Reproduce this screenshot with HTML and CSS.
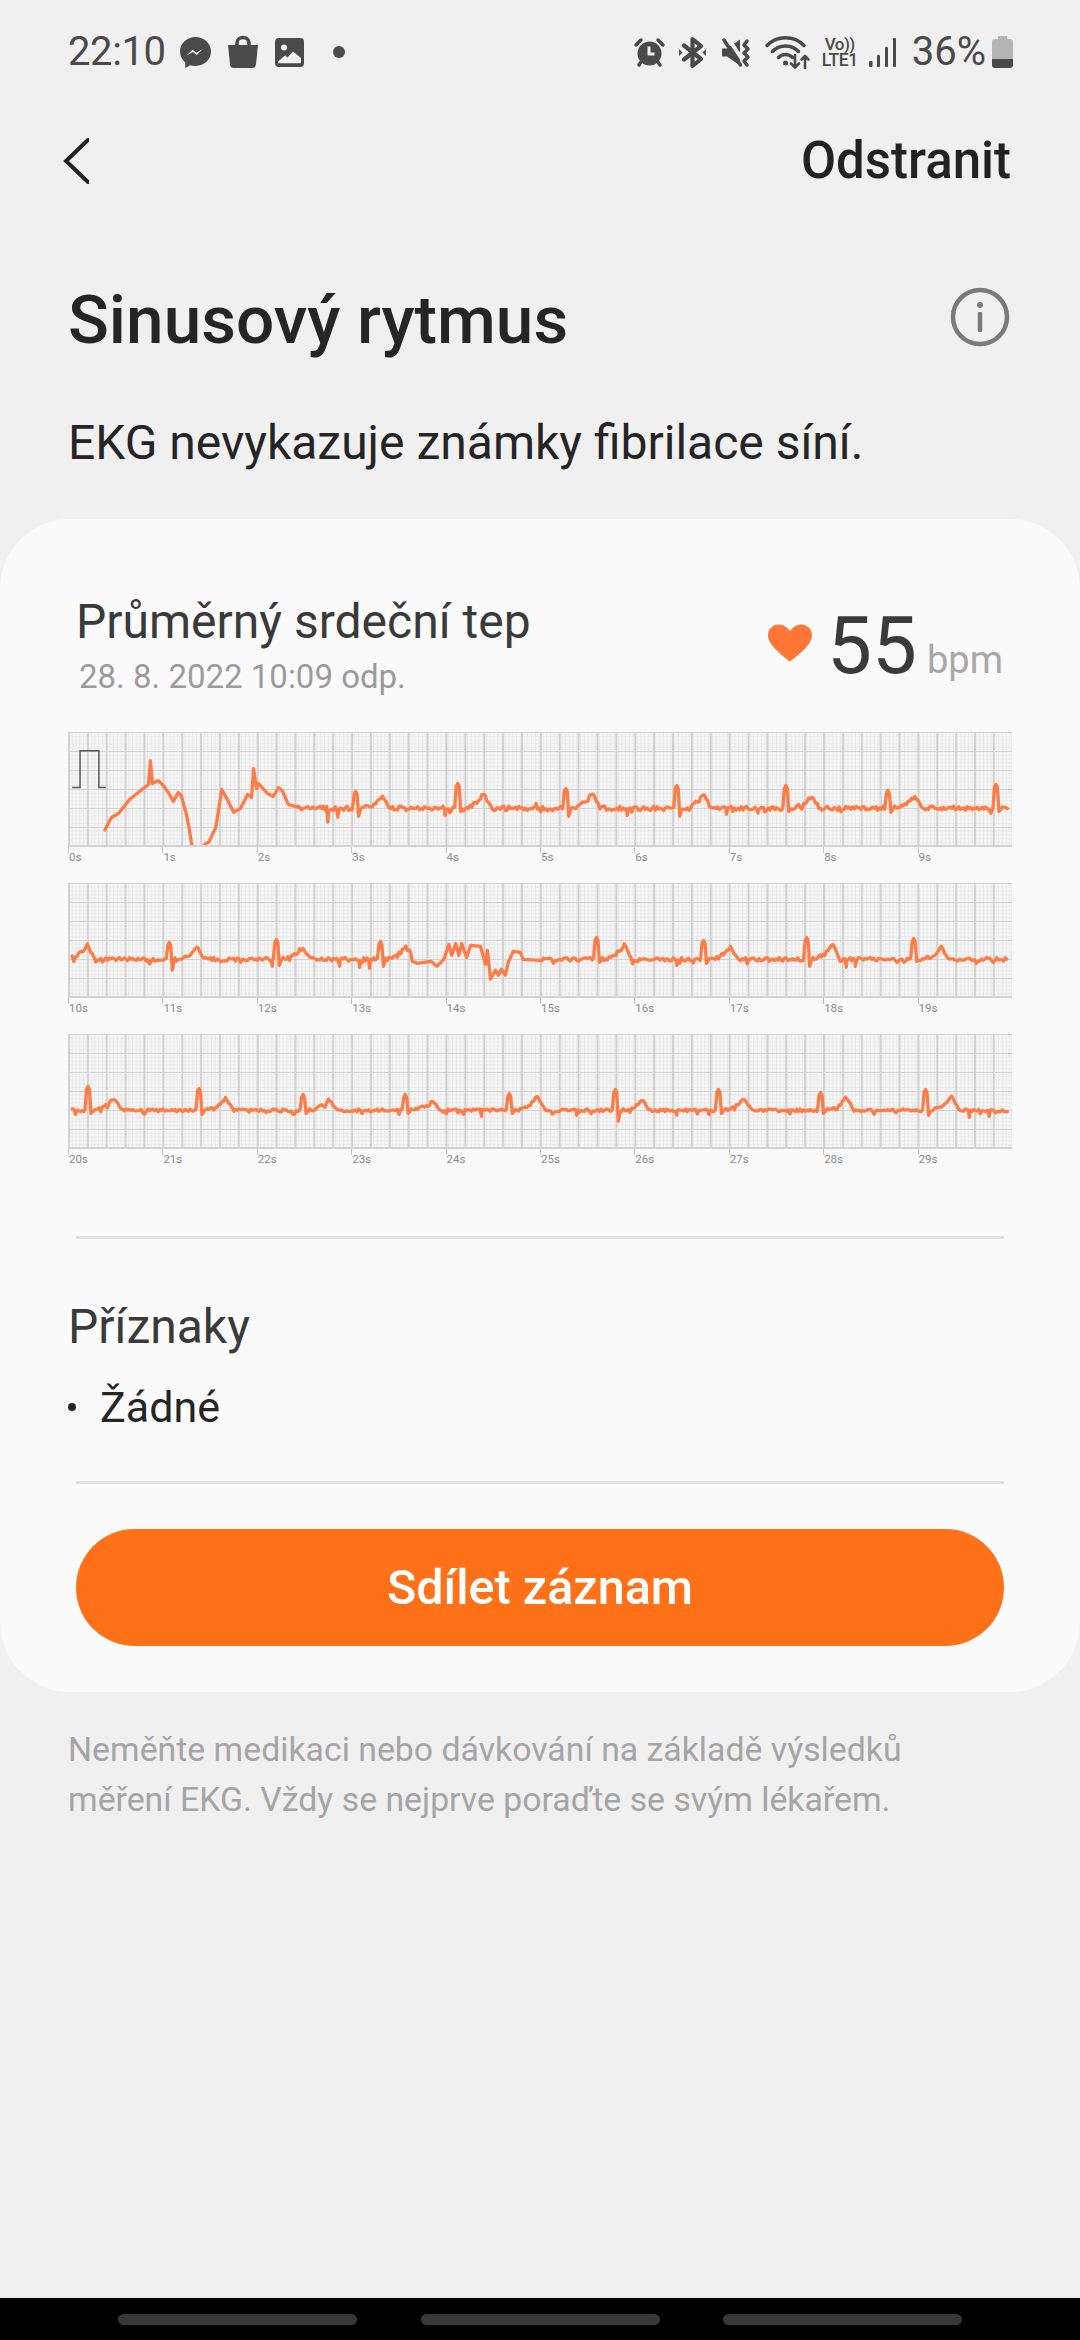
FILE: index.html
```html
<!DOCTYPE html>
<html lang="cs">
<head>
<meta charset="utf-8">
<title>Sinusový rytmus</title>
<link rel="stylesheet" href="styles.css">
</head>
<body>
<div class="page">
  <header class="status">
    <div class="status-left">
      <span class="clock">22:10</span>
      <svg class="ic ic-msg" viewBox="0 0 31 31"><path class="fill" d="M15.5 0C6.9 0 0 6.4 0 14.6c0 4.4 2 8.2 5.2 10.9V31l5-2.8c1.7.5 3.4.8 5.3.8C24.100 29 31 22.700 31 14.600 31 6.400 24.100 0 15.500 0z"/><path class="knock" d="M6.500 18.500l6-5.800 3.800 3 6.500-3.600-6 6-3.800-3z"/></svg>
      <svg class="ic ic-bag" viewBox="0 0 30 32"><path class="line" d="M9 10V7a6 5.500 0 0 1 12 0v3" /><path class="fill" d="M0 9h30l-2 19a4 4 0 0 1-4 4H6a4 4 0 0 1-4-4z"/></svg>
      <svg class="ic ic-img" viewBox="0 0 29 29"><rect class="fill" width="29" height="29" rx="4"/><circle class="knock" cx="9" cy="9.500" r="3"/><path class="knock" d="M3 23.500l7-6 2.500 2L18 13.500l8 6.500v4.200a1 1 0 0 1-1 1H3z"/></svg>
      <span class="dot"></span>
    </div>
    <div class="status-right">
      <svg class="ic ic-alarm" viewBox="0 0 29 29"><circle class="fill" cx="14.500" cy="15.500" r="12"/><path class="line" d="M1 7l5-5M28 7l-5-5M4 27l2-3M25 27l-2-3"/><path class="cut" d="M14 8.500v7.500h5.500"/></svg>
      <svg class="ic ic-bt" viewBox="0 0 27 31"><path class="line line-bold" d="M5 8.500l17 13.500-8.500 7V2l8.500 7L5 22.500"/><path class="fill" d="M0 12l3.500 3.500L0 19zM27 12l-3.500 3.500L27 19z"/></svg>
      <svg class="ic ic-mute" viewBox="0 0 29 27"><path class="fill" d="M0 9.500h5l13-9v26l-13-9H0z" /><path class="slash" d="M6 -1l18 27"/><path class="line" d="M2 1l16.500 25"/><path class="line" d="M25 2l-3 4 4 4-4 4 4 4-4 4 3 4"/></svg>
      <svg class="ic ic-wifi" viewBox="0 0 44 33"><path class="line" d="M1 9.500c10-10.500 27-10.500 37 0M6.500 15.500c7-7.500 19-7.500 26 0M12.500 21.500c4-4 10-4 14 0"/><circle class="fill" cx="19.500" cy="27" r="2.500"/><path class="thin" d="M29 19v12M25 27.500l4 4 4-4M39 32V20M35.500 23.500l3.500-3.500 3.500 3.500"/></svg>
      <span class="volte"><span class="vo">Vo))</span><span class="lte">LTE1</span></span>
      <svg class="ic ic-sig" viewBox="0 0 27 29"><rect class="fill" x="0" y="23" width="3.500" height="6" rx="1"/><rect class="fill" x="8" y="17" width="3" height="12" rx="1"/><rect class="fill" x="16" y="9" width="3" height="20" rx="1"/><rect class="fill" x="24" y="0" width="3" height="29" rx="1"/></svg>
      <span class="pct">36%</span>
      <svg class="ic ic-bat" viewBox="0 0 21 32"><path class="bat-empty" d="M6 0h9v3h3a3 3 0 0 1 3 3v17H0V6a3 3 0 0 1 3-3h3z"/><path class="fill" d="M0 23h21v6a3 3 0 0 1-3 3H3a3 3 0 0 1-3-3z"/></svg>
    </div>
  </header>

  <nav class="appbar">
    <svg class="back" viewBox="0 0 26 46"><path d="M25 2L3 23l22 21"/></svg>
    <span class="action">Odstranit</span>
  </nav>

  <div class="title-row">
    <h1 class="title">Sinusový rytmus</h1>
    <svg class="info" viewBox="0 0 60 60"><circle class="info-ring" cx="30" cy="30" r="27"/><circle class="info-dot" cx="30" cy="18" r="3"/><rect class="info-dot" x="27.800" y="25" width="4.400" height="20" rx="1"/></svg>
  </div>
  <p class="subtitle">EKG nevykazuje známky fibrilace síní.</p>

  <main class="card">
    <section class="summary">
      <div class="summary-text">
        <div class="summary-title">Průměrný srdeční tep</div>
        <div class="summary-date">28. 8. 2022 10:09 odp.</div>
      </div>
      <div class="summary-value">
        <svg class="heart" viewBox="0 0 45 38"><path d="M22.500 38C14 31 0 21 0 11 0 4.500 5 0 11 0c5 0 9 3 11.500 7C25 3 29 0 34 0c6 0 11 4.500 11 11 0 10-14 20-22.500 27z"/></svg>
        <span class="bpm-num">55</span>
        <span class="bpm-unit">bpm</span>
      </div>
    </section>

    <section class="charts">
      <div class="chart">
        <div class="grid"><svg class="trace" data-row="0" viewBox="0 0 944 114"></svg></div>
        <div class="ticks"><span>0s</span><span>1s</span><span>2s</span><span>3s</span><span>4s</span><span>5s</span><span>6s</span><span>7s</span><span>8s</span><span>9s</span></div>
      </div>
      <div class="chart">
        <div class="grid"><svg class="trace" data-row="1" viewBox="0 0 944 114"></svg></div>
        <div class="ticks"><span>10s</span><span>11s</span><span>12s</span><span>13s</span><span>14s</span><span>15s</span><span>16s</span><span>17s</span><span>18s</span><span>19s</span></div>
      </div>
      <div class="chart">
        <div class="grid"><svg class="trace" data-row="2" viewBox="0 0 944 114"></svg></div>
        <div class="ticks"><span>20s</span><span>21s</span><span>22s</span><span>23s</span><span>24s</span><span>25s</span><span>26s</span><span>27s</span><span>28s</span><span>29s</span></div>
      </div>
    </section>

    <hr class="rule rule-a">
    <section class="symptoms">
      <div class="symptoms-title">Příznaky</div>
      <div class="symptom"><span class="bullet"></span><span>Žádné</span></div>
    </section>
    <hr class="rule rule-b">
    <button class="share">Sdílet záznam</button>
  </main>

  <p class="note">Neměňte medikaci nebo dávkování na základě výsledků<br>měření EKG. Vždy se nejprve poraďte se svým lékařem.</p>

  <footer class="navbar"><span class="pill"></span><span class="pill"></span><span class="pill"></span></footer>
</div>
<script src="ecg.js"></script>
</body>
</html>
```

FILE: styles.css
```css
* { box-sizing: border-box; }
html, body { margin: 0; padding: 0; }
body { width: 1080px; height: 2340px; overflow: hidden; background: #f0f0f0; font-family: Roboto, "Noto Sans", sans-serif; }
.page { height: 2340px; display: flex; flex-direction: column; background: #f0f0f0; }

.status { height: 104px; display: flex; align-items: center; justify-content: space-between; padding: 0 67px 0 68px; color: #4a4a4a; }
.status-left, .status-right { display: flex; align-items: center; }
.clock { font-size: 40px; font-weight: 400; letter-spacing: -0.4px; margin-right: 14px; line-height: 1; }
.pct { font-size: 40px; line-height: 1; margin: 0 6px 0 16px; }
.ic { display: block; flex: none; overflow: visible; }
.fill { fill: #4a4a4a; }
.knock { fill: #f0f0f0; }
.line { fill: none; stroke: #4a4a4a; stroke-width: 3.5; stroke-linecap: round; stroke-linejoin: round; }
.line-bold { stroke-width: 4.2; }
.thin { fill: none; stroke: #4a4a4a; stroke-width: 2.6; stroke-linecap: round; stroke-linejoin: round; }
.cut { fill: none; stroke: #f0f0f0; stroke-width: 3; }
.slash { fill: none; stroke: #f0f0f0; stroke-width: 4; }
.bat-empty { fill: #b5b5b5; }
.ic-msg { width: 31px; height: 31px; margin-right: 17px; }
.ic-bag { width: 30px; height: 32px; margin-right: 17px; }
.ic-img { width: 29px; height: 29px; margin-right: 29px; }
.dot { width: 12px; height: 12px; border-radius: 50%; background: #4a4a4a; }
.ic-alarm { width: 29px; height: 29px; margin-right: 15px; }
.ic-bt { width: 27px; height: 31px; margin-right: 16px; }
.ic-mute { width: 29px; height: 27px; margin-right: 15px; }
.ic-wifi { width: 44px; height: 33px; margin-right: 11px; }
.volte { display: flex; flex-direction: column; align-items: center; width: 38px; margin-right: 10px; font-weight: 500; }
.vo { font-size: 17px; height: 16px; line-height: 16px; letter-spacing: -0.5px; }
.lte { font-size: 17.500px; height: 16px; line-height: 16px; letter-spacing: -0.4px; }
.ic-sig { width: 27px; height: 29px; }
.ic-bat { width: 21px; height: 32px; }

.appbar { height: 112px; padding: 1px 69px 0 63px; display: flex; align-items: center; justify-content: space-between; }
.back { width: 26px; height: 46px; fill: none; stroke: #222; stroke-width: 4; stroke-linecap: round; stroke-linejoin: miter; }
.action { font-size: 51px; font-weight: 500; color: #222; line-height: 1; }

.title-row { height: 118px; margin-top: 45px; display: flex; align-items: center; justify-content: space-between; padding: 0 70px 0 68px; }
.title { margin: 0; font-size: 67.500px; font-weight: 500; color: #252525; line-height: 1; }
.info { width: 60px; height: 60px; margin-top: -6px; }
.info-ring { fill: none; stroke: #7a7a7a; stroke-width: 4.500; }
.info-dot { fill: #7a7a7a; }
.subtitle { margin: 0; height: 140px; padding: 39px 0 0 68px; font-size: 48px; line-height: 50px; color: #252525; }

.card { height: 1173px; flex: none; background: #fafafa; border-radius: 70px; display: flex; flex-direction: column; }
.summary { height: 213px; padding: 78px 76px 0 76px; display: flex; justify-content: space-between; align-items: flex-start; }
.summary-title { font-size: 48px; line-height: 50px; color: #3a3a3a; }
.summary-date { font-size: 33px; line-height: 40px; margin: 10px 0 0 3px; color: #9b9b9b; }
.summary-value { display: flex; align-items: baseline; margin-top: 7px; padding-right: 1px; }
.heart { width: 44px; height: 38px; fill: #ff7637; align-self: flex-start; margin: 20px 15px 0 0; }
.bpm-num { font-size: 80px; line-height: 84px; color: #3a3a3a; }
.bpm-unit { font-size: 38px; color: #a8a8a8; margin-left: 10px; }

.charts { padding: 0 68px; display: flex; flex-direction: column; gap: 0; }
.chart { height: 151px; }
.grid {
  width: 944px; height: 115px;
  background-color: #f7f7f7;
  background-image:
    linear-gradient(to right, #d2d2d2 1.500px, transparent 1.500px),
    linear-gradient(to bottom, #d2d2d2 1.500px, transparent 1.500px),
    linear-gradient(to right, #e8e8e8 1px, transparent 1px),
    linear-gradient(to bottom, #e8e8e8 1px, transparent 1px);
  background-size: 18.880px 19px, 18.880px 19px, 3.776px 3.800px, 3.776px 3.800px;
  border-bottom: 2px solid #d2d2d2;
}
.trace { display: block; width: 944px; height: 113px; overflow: hidden; }
.trace-line { fill: none; stroke: #ff7b45; stroke-width: 3.300; stroke-linejoin: round; stroke-linecap: round; }
.trace-cal { fill: none; stroke: #555; stroke-width: 1.500; }
.ticks { display: grid; grid-template-columns: repeat(10, 94.400px); }
.ticks span { position: relative; padding: 3px 0 0 1px; font-size: 11.500px; line-height: 14px; color: #8a8a8a; }
.ticks span::before { content: ""; position: absolute; left: 0; top: 0; width: 1px; height: 6px; background: #c4c4c4; }

.rule { margin: 0 76px; border: 0; height: 3px; background: #e2e2e2; flex: none; }
.rule-a { margin-top: 51px; }
.symptoms { height: 242px; padding: 60px 68px 0; }
.symptoms-title { font-size: 48px; line-height: 56px; color: #3a3a3a; }
.symptom { display: flex; align-items: center; margin-top: 25px; font-size: 43px; line-height: 54px; color: #252525; }
.bullet { width: 8px; height: 8px; border-radius: 50%; background: #252525; margin-right: 24px; }
.share { width: 928px; height: 117px; margin: 45px 76px 0; flex: none; border: 0; border-radius: 59px; background: #ff7119; color: #fff; font-family: Roboto, "Noto Sans", sans-serif; font-size: 48.500px; font-weight: 500; }

.note { margin: 33px 0 0; padding: 0 68px; font-size: 33.800px; line-height: 50px; color: #a5a5a5; }
.navbar { margin-top: auto; height: 42px; background: #000; display: flex; padding: 16px 118px 0; gap: 63.500px; }
.pill { width: 239px; height: 11px; border-radius: 6px; background: #383838; }
```

FILE: ecg.js
```js
// Draws the ECG traces from beat data: each row has its R peaks, T waves and hand-traced irregular runs.
var ROWS = [
  {
    start: 228, noise: 2.2,
    lead: [[33,99],[37,91],[40,86],[47,82],[58,68],[68,60],[77,53],[79,29],[81,52],[87,49],[92,54],[97,61],[102,70],[107,61],[110,64],[115,82],[118,97],[121,116],[132,116],[134,113],[138,111],[145,96],[151,58],[157,69],[163,81],[170,77],[177,63],[181,66],[183,37],[186,57],[188,52],[197,62],[203,65],[208,56],[212,59],[218,73],[228,76]],
    beats: [[286,60,8],[389,52,3],[498,57,8],[610,54,8],[720,54,3],[823,59,4],[932,53,3]],
    waves: [[313,63],[415,62],[525,61],[637,63],[746,64],[850,64]],
    spikes: [[258,91],[268,86],[376,84],[468,72],[560,84],[660,83],[692,82]],
    seed: 11
  },
  {
    start: 0, noise: 1.8,
    irregular: [[343,79],[348,81],[362,79],[368,84],[375,77],[380,62],[383,73],[387,61],[390,73],[393,61],[398,75],[402,63],[412,64],[417,82],[419,68],[422,97],[427,88],[430,93],[433,87],[437,93],[440,80],[445,69],[452,70],[455,77],[472,78]],
    beats: [[98,60,11],[206,57,6],[311,59,7],[529,55,3],[637,58,4],[741,55,7],[849,56,2]],
    waves: [[15,62],[126,65],[232,64],[337,63],[557,62],[664,64],[767,62],[877,65]],
    spikes: [[202,84],[270,84],[290,85],[300,86],[610,83],[781,85],[790,84]],
    seed: 37
  },
  {
    start: 0, noise: 1.4,
    beats: [[16,53,3],[128,55,4],[233,61,3],[336,61,3],[441,60,3],[548,56,11],[652,56,3],[755,59,3],[861,56,5]],
    waves: [[42,64],[155,65],[259,66],[363,66],[469,63],[575,67],[678,65],[781,64],[887,63]],
    spikes: [[413,83],[395,81],[509,82],[610,82],[905,84],[925,83]],
    seed: 73
  }
];

var BASE = 77;

function rng(seed) {
  var s = seed;
  return function () {
    s = (s * 16807) % 2147483647;
    return s / 2147483647;
  };
}

function waveAt(x, waves) {
  var d = 0;
  waves.forEach(function (w) {
    var dx = x - w[0];
    var amp = BASE - w[1];
    if (dx <= 0 && dx > -22) {
      var t = (dx + 22) / 22;
      d = Math.max(d, amp * (0.28 * t + 0.72 * t * t * t));
    } else if (dx > 0 && dx < 8) {
      d = Math.max(d, amp * (1 - dx / 8));
    }
  });
  return d;
}

function buildPoints(row) {
  var rand = rng(row.seed);
  var pts = [];
  var runs = row.irregular || [];
  var runStart = runs.length ? runs[0][0] : Infinity;
  var runEnd = runs.length ? runs[runs.length - 1][0] : -Infinity;

  (row.lead || []).forEach(function (p) { pts.push(p); });

  for (var x = row.start; x <= 944; x += 1.7) {
    if (x >= runStart && x <= runEnd) {
      if (runs) {
        runs.forEach(function (p) { pts.push(p); });
        x = runEnd;
        runs = null;
        runStart = Infinity;
      }
      continue;
    }
    var n = (rand() - 0.5) * 2 * row.noise;
    if (rand() > 0.94) n += 3;
    pts.push([x, BASE - waveAt(x, row.waves) + n]);
  }

  row.spikes.forEach(function (s) {
    pts.push([s[0], s[1]]);
  });

  row.beats.forEach(function (b) {
    var r = b[0];
    pts = pts.filter(function (p) { return p[0] < r - 3 || p[0] > r + 5; });
    pts.push([r - 3, BASE - 1], [r - 1.500, b[1] + 3], [r, b[1]], [r + 1.500, b[1] + 3], [r + 3, BASE + b[2]], [r + 5, BASE + 1]);
  });

  pts.sort(function (a, b) { return a[0] - b[0]; });
  return pts;
}

function addPath(svg, d, cls) {
  var p = document.createElementNS("http://www.w3.org/2000/svg", "path");
  p.setAttribute("d", d);
  p.setAttribute("class", cls);
  svg.appendChild(p);
}

document.querySelectorAll(".trace").forEach(function (svg) {
  var i = Number(svg.getAttribute("data-row"));
  var d = buildPoints(ROWS[i]).map(function (p, k) {
    return (k ? "L" : "M") + p[0].toFixed(1) + " " + p[1].toFixed(1);
  }).join("");
  if (i === 0) addPath(svg, "M0 56H8V19H27V56H34", "trace-cal");
  addPath(svg, d, "trace-line");
});
```
